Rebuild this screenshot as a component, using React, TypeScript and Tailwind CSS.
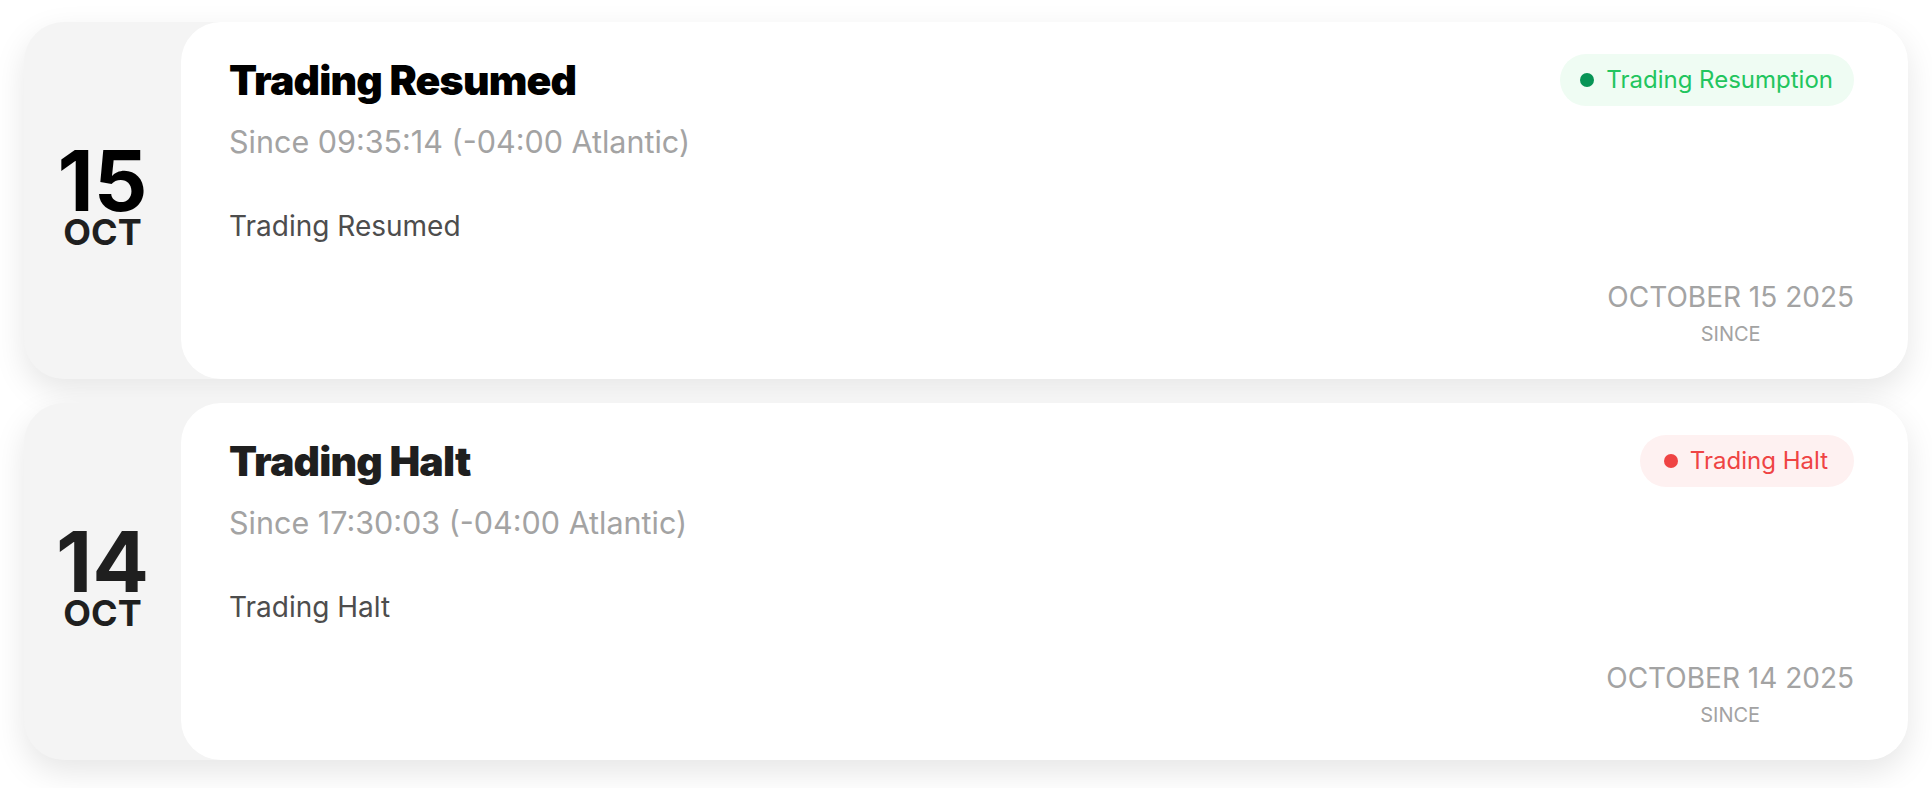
import React from "react";

type Notice = {
  day: string;
  month: string;
  title: string;
  since: string;
  body: string;
  date: string;
  badge: string;
  tone: "green" | "red";
  strong?: boolean;
};

const notices: Notice[] = [
  {
    day: "15",
    month: "OCT",
    title: "Trading Resumed",
    since: "Since 09:35:14 (-04:00 Atlantic)",
    body: "Trading Resumed",
    date: "OCTOBER 15 2025",
    badge: "Trading Resumption",
    tone: "green",
    strong: true,
  },
  {
    day: "14",
    month: "OCT",
    title: "Trading Halt",
    since: "Since 17:30:03 (-04:00 Atlantic)",
    body: "Trading Halt",
    date: "OCTOBER 14 2025",
    badge: "Trading Halt",
    tone: "red",
  },
];

const badgeStyles = {
  green: {
    wrap: "bg-[#effcf3] text-[#22c55e] pl-[20px] pr-[21px]",
    dot: "bg-[#079455]",
  },
  red: {
    wrap: "bg-[#fef1f1] text-[#ef4444] pl-[24px] pr-[26px]",
    dot: "bg-[#ef4444]",
  },
};

function NoticeCard({ notice }: { notice: Notice }) {
  const ink = notice.strong ? "text-black" : "text-[#1f1f1f]";
  const badge = badgeStyles[notice.tone];

  return (
    <div className="flex h-[357px] rounded-[40px] bg-[#f4f4f4] shadow-[0_12px_32px_rgba(0,0,0,0.10)]">
      <div className="flex w-[157px] shrink-0 flex-col items-center justify-center pb-[10px]">
        <span className={`text-[84px] leading-[72px] font-bold ${ink}`}>
          {notice.day}
        </span>
        <span className="text-[36px] leading-[30px] font-bold text-[#1f1f1f]">
          {notice.month}
        </span>
      </div>

      <div className="flex flex-1 flex-col rounded-[40px] bg-white pt-[36px] pr-[54px] pb-[33px] pl-12">
        <div className="flex items-start justify-between">
          <div>
            <h2 className={`text-[41px] leading-[45px] font-black tracking-[-0.02em] ${ink}`}>
              {notice.title}
            </h2>
            <p className="mt-[21px] text-[30.5px] leading-[35px] text-[#a3a3a3]">
              {notice.since}
            </p>
          </div>
          <span
            className={`mt-[-4px] flex h-[52px] items-center gap-3 rounded-full text-[24px] ${badge.wrap}`}
          >
            <span className={`h-[14px] w-[14px] rounded-full ${badge.dot}`} />
            {notice.badge}
          </span>
        </div>

        <p className="mt-[50px] text-[28px] leading-[34px] text-[#4d4d4d]">
          {notice.body}
        </p>

        <div className="mt-auto self-end text-center">
          <p className="text-[28px] leading-[34px] text-[#a3a3a3]">{notice.date}</p>
          <p className="mt-[8px] text-[20px] leading-[24px] text-[#a3a3a3]">SINCE</p>
        </div>
      </div>
    </div>
  );
}

export default function App() {
  return (
    <div className="min-h-screen bg-white px-6 pt-[22px] pb-7 font-['Inter',sans-serif]">
      <div className="flex flex-col gap-6">
        {notices.map((notice) => (
          <NoticeCard key={notice.day} notice={notice} />
        ))}
      </div>
    </div>
  );
}
